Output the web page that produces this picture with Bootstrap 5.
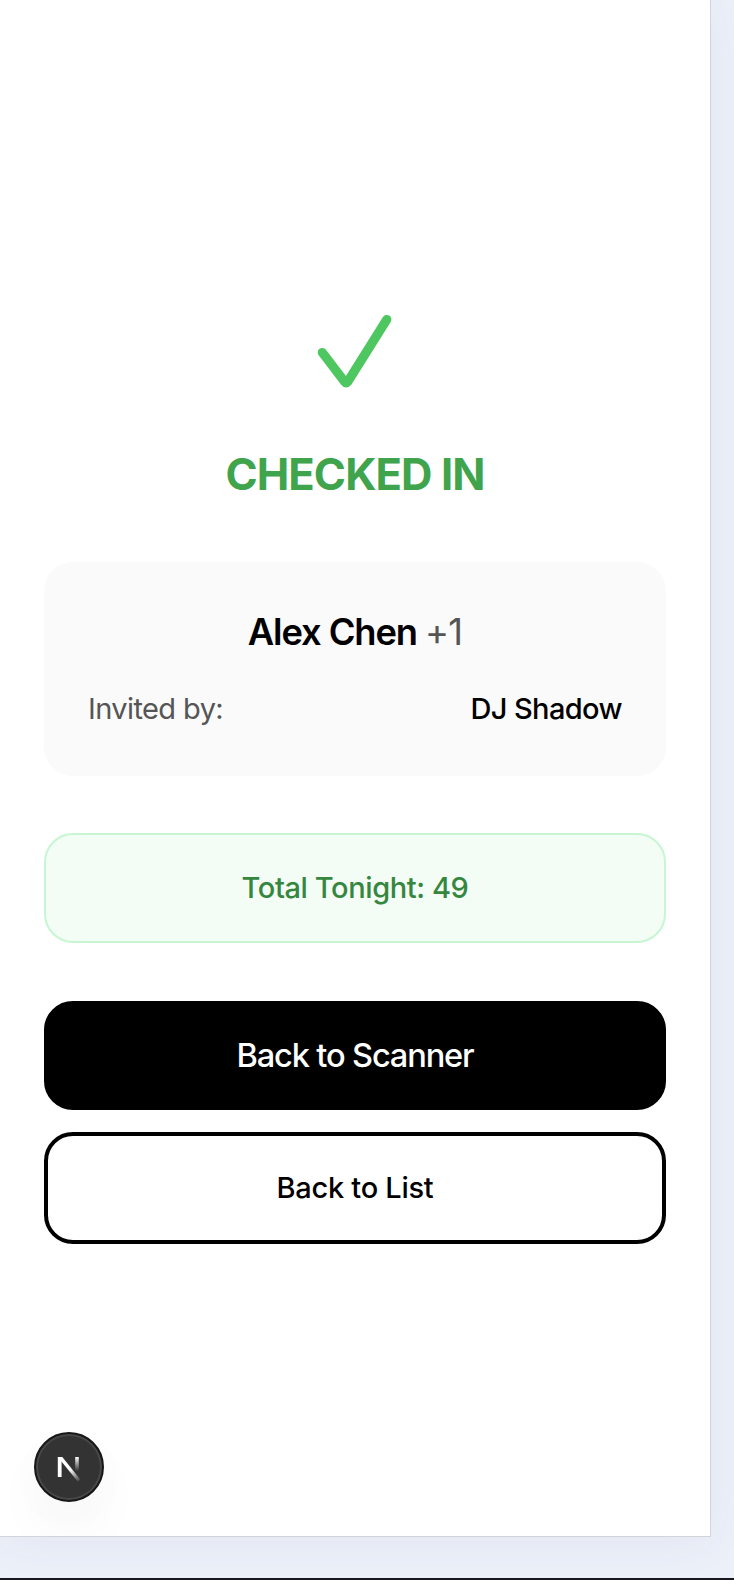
<!DOCTYPE html>
<html lang="en">
<head>
<meta charset="utf-8">
<meta name="viewport" content="width=device-width, initial-scale=1">
<title>Checked In</title>
<link href="https://cdn.jsdelivr.net/npm/bootstrap@5.3.0/dist/css/bootstrap.min.css" rel="stylesheet">
<style>
  body { font-family: Inter, "Liberation Sans", sans-serif; background: #ebf0f9; color: #000; height: 1580px; border-bottom: 2px solid #17171d; overflow: hidden; }
  .phone { width: 711px; height: 1537px; background: #fff; border: solid #d3d4d9; border-width: 0 1px 1px 0; box-shadow: 0 4px 44px rgba(60, 70, 100, .06); padding: 309px 44px 0; }
  .tick { width: 84px; height: 84px; }
  .status { font-size: 43.5px; line-height: 54px; font-weight: 700; color: #40a44c; margin: 54px 0 61px; letter-spacing: -.9px; }
  .guest, .total, .action { border-radius: 29px; }
  .guest { background: #fafafa; height: 214px; padding: 45px 44px 0; }
  .guest-name { font-size: 36.3px; line-height: 51px; font-weight: 600; margin-bottom: 29px; letter-spacing: -1.1px; }
  .plus-one, .muted-label { color: #555; font-weight: 400; }
  .plus-one { letter-spacing: -.8px; }
  .guest-row, .total, .action-list { font-size: 29px; line-height: 44px; }
  .guest-row { letter-spacing: -.6px; }
  .mid-weight { font-weight: 500; }
  .total { height: 110px; margin: 57px 0 58px; background: #f3fcf5; border: 2px solid #c8f5d2; color: #35873f; letter-spacing: -.4px; }
  .action { --bs-btn-border-width: 4px; --bs-btn-font-weight: 500; }
  .btn.action { border-radius: 29px; }
  .action-scan { height: 109px; font-size: 32.6px; letter-spacing: -1.15px; --bs-btn-bg: #000; --bs-btn-border-color: #000; --bs-btn-color: #fff; }
  .action-list { height: 112px; margin-top: 22px; letter-spacing: -.28px; --bs-btn-color: #000; --bs-btn-border-color: #000; }
  .dev-badge { left: 34px; top: 1432px; width: 70px; height: 70px; background: #333; border: 2px solid #171717; box-shadow: inset 0 0 0 2px #484848, 0 29px 58px -8px rgba(0,0,0,.06), 0 10px 58px rgba(0,0,0,.02); clip-path: inset(-80px -80px -34px -80px); }
</style>
</head>
<body>
<main class="phone position-relative d-flex flex-column">
  <svg class="tick align-self-center" viewBox="313 309 84 84" fill="none" aria-hidden="true">
    <path d="M322.3 352.5 344.8 382Q346.2 383.8 347.6 382L386.8 319.5" stroke="#4fc761" stroke-width="9.2" stroke-linecap="round" stroke-linejoin="round"/>
  </svg>
  <h1 class="status text-center">CHECKED IN</h1>
  <section class="guest">
    <h2 class="guest-name text-center">Alex Chen <span class="plus-one">+1</span></h2>
    <div class="guest-row d-flex justify-content-between">
      <span class="muted-label">Invited by:</span>
      <span class="mid-weight">DJ Shadow</span>
    </div>
  </section>
  <div class="total mid-weight d-flex align-items-center justify-content-center">Total Tonight: 49</div>
  <button class="btn action action-scan w-100" type="button">Back to Scanner</button>
  <button class="btn action action-list w-100" type="button">Back to List</button>
  <div class="dev-badge position-absolute rounded-circle">
    <svg class="d-block" width="66" height="66" viewBox="36 1434 66 66" aria-hidden="true">
      <defs>
        <linearGradient id="diag" gradientUnits="userSpaceOnUse" x1="70" y1="1470" x2="80" y2="1482"><stop stop-color="#fff"/><stop offset="1" stop-color="#fff" stop-opacity="0"/></linearGradient>
        <linearGradient id="stem" gradientUnits="userSpaceOnUse" x1="77" y1="1457" x2="77" y2="1471"><stop stop-color="#fff"/><stop offset="1" stop-color="#fff" stop-opacity="0"/></linearGradient>
      </defs>
      <path d="M57.8 1457h3.8v20h-3.8z" fill="#fff"/>
      <path d="M57.8 1457h4.5l18 22.5-2.4 2.2z" fill="url(#diag)"/>
      <path d="M75.2 1457h3.6v14h-3.6z" fill="url(#stem)"/>
    </svg>
  </div>
</main>
<script src="https://cdn.jsdelivr.net/npm/bootstrap@5.3.0/dist/js/bootstrap.bundle.min.js"></script>
</body>
</html>
